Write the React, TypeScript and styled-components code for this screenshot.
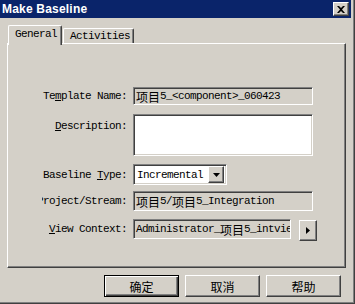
import React from "react";
import styled, { createGlobalStyle, css } from "styled-components";

const GlobalStyle = createGlobalStyle`
  html, body { margin: 0; padding: 0; background: #d4d0c8; }
  * { box-sizing: border-box; }
`;

const MONO = `"Liberation Mono", monospace`;
const CJK = `"Noto Sans CJK SC", "Liberation Sans", sans-serif`;

const raised = css`
  border: 1px solid;
  border-color: #ffffff #404040 #404040 #ffffff;
  box-shadow: inset -1px -1px #808080, inset 1px 1px #d4d0c8;
`;

const sunken = css`
  border: 1px solid;
  border-color: #808080 #ffffff #ffffff #808080;
  box-shadow: inset 1px 1px #404040, inset -1px -1px #d4d0c8;
`;

const monoText = css`
  font-family: ${MONO};
  font-size: 11px;
  letter-spacing: -0.6px;
  color: #000;
`;

const Window = styled.div`
  width: 355px;
  height: 304px;
  background: #d4d0c8;
  display: flex;
  flex-direction: column;
  padding: 0 4px 2px 0;
  box-shadow: inset -1px -1px #404040, inset -2px -2px #808080;
  overflow: hidden;
`;

const TitleBar = styled.div`
  height: 18px;
  background: #0a246a;
  display: flex;
  align-items: center;
  justify-content: space-between;
  padding: 0 2px 0 2px;
`;

const Title = styled.span`
  color: #ffffff;
  font-family: "Liberation Sans", Arial, sans-serif;
  font-weight: bold;
  font-size: 12px;
  letter-spacing: 0.2px;
`;

const CloseButton = styled.div`
  width: 16px;
  height: 14px;
  background: #d4d0c8;
  ${raised};
  display: flex;
  align-items: center;
  justify-content: center;
`;

const Body = styled.div`
  display: flex;
  flex-direction: column;
  padding: 7px 0 0 7px;
`;

const TabStrip = styled.div`
  display: flex;
  align-items: flex-end;
  height: 18px;
  padding-left: 1px;
  position: relative;
  z-index: 1;
`;

const Tab = styled.div<{ $active?: boolean }>`
  ${monoText};
  background: #d4d0c8;
  border-top: 1px solid #ffffff;
  border-left: 1px solid #ffffff;
  border-right: 1px solid #404040;
  border-radius: 2px 2px 0 0;
  box-shadow: inset -1px 0 #808080;
  display: flex;
  align-items: center;
  ${(p) =>
    p.$active
      ? css`
          height: 20px;
          margin-bottom: -2px;
          padding: 0 6px 3px 6px;
          width: 54px;
        `
      : css`
          height: 15px;
          padding: 0 5px 0 6px;
          width: 71px;
          margin-left: 1px;
        `}
`;

const Panel = styled.div`
  width: 339px;
  height: 225px;
  border: 1px solid;
  border-color: #ffffff #404040 #404040 #ffffff;
  box-shadow: inset -1px -1px #808080;
  padding: 43px 0 0 34px;
  display: flex;
  flex-direction: column;
`;

const Row = styled.div<{ $gap: number; $height: number; $top?: boolean }>`
  display: flex;
  align-items: ${(p) => (p.$top ? "flex-start" : "center")};
  margin-top: ${(p) => p.$gap}px;
  height: ${(p) => p.$height}px;
  gap: 6px;
`;

const Label = styled.div<{ $pad?: number }>`
  width: 85px;
  flex: none;
  display: flex;
  justify-content: flex-end;
  overflow: hidden;
  white-space: nowrap;
  ${monoText};
  padding-top: ${(p) => p.$pad ?? 0}px;
`;

const U = styled.span`
  text-decoration: underline;
`;

const Han = styled.span`
  font-family: ${CJK};
  font-size: 12px;
  letter-spacing: 0;
`;

const Latin = styled.span`
  ${monoText};
`;

const Field = styled.div<{ $width: number; $white?: boolean }>`
  width: ${(p) => p.$width}px;
  height: 100%;
  background: ${(p) => (p.$white ? "#ffffff" : "#d4d0c8")};
  ${sunken};
  ${monoText};
  display: flex;
  align-items: center;
  padding: 0 2px;
  white-space: nowrap;
  overflow: hidden;
`;

const Select = styled.div`
  width: 94px;
  height: 21px;
  background: #ffffff;
  ${sunken};
  display: flex;
  align-items: center;
  justify-content: space-between;
  padding: 2px 2px 2px 3px;
  ${monoText};
`;

const DropButton = styled.div`
  width: 16px;
  height: 17px;
  background: #d4d0c8;
  ${raised};
  display: flex;
  align-items: center;
  justify-content: center;
`;

const ArrowButton = styled.div`
  width: 18px;
  height: 21px;
  margin-left: 2px;
  margin-top: 2px;
  background: #d4d0c8;
  ${raised};
  display: flex;
  align-items: center;
  justify-content: center;
`;

const ButtonRow = styled.div`
  display: flex;
  justify-content: flex-end;
  gap: 6px;
  padding-right: 10px;
  margin-top: 7px;
`;

const Button = styled.div<{ $default?: boolean }>`
  width: 75px;
  height: 22px;
  background: #d4d0c8;
  font-family: ${CJK};
  font-size: 12px;
  color: #000;
  display: flex;
  align-items: center;
  justify-content: center;
  ${(p) =>
    p.$default
      ? css`
          border: 1px solid #000;
          box-shadow: inset 1px 1px #ffffff, inset -1px -1px #404040,
            inset -2px -2px #808080;
        `
      : raised}
`;

export default function App() {
  return (
    <>
      <GlobalStyle />
      <Window>
        <TitleBar>
          <Title>Make Baseline</Title>
          <CloseButton>
            <svg width="8" height="7" viewBox="0 0 8 7">
              <path d="M0 0 L2 0 L4 2 L6 0 L8 0 L5 3.5 L8 7 L6 7 L4 5 L2 7 L0 7 L3 3.5 Z" fill="#000" />
            </svg>
          </CloseButton>
        </TitleBar>
        <Body>
          <TabStrip>
            <Tab $active>General</Tab>
            <Tab>Activities</Tab>
          </TabStrip>
          <Panel>
            <Row $gap={0} $height={18}>
              <Label>
                <span>
                  Te<U>m</U>plate Name:
                </span>
              </Label>
              <Field $width={180}>
                <Han>项目</Han>
                <Latin>5_&lt;component&gt;_060423</Latin>
              </Field>
            </Row>
            <Row $gap={9} $height={42} $top>
              <Label $pad={6}>
                <span>
                  <U>D</U>escription:
                </span>
              </Label>
              <Field $width={180} $white />
            </Row>
            <Row $gap={8} $height={21}>
              <Label>
                <span>
                  Baseline <U>T</U>ype:
                </span>
              </Label>
              <Select>
                <span>Incremental</span>
                <DropButton>
                  <svg width="7" height="4" viewBox="0 0 7 4">
                    <path d="M0 0 H7 L3.5 4 Z" fill="#000" />
                  </svg>
                </DropButton>
              </Select>
            </Row>
            <Row $gap={6} $height={20}>
              <Label>
                <span>Project/Stream:</span>
              </Label>
              <Field $width={180}>
                <Han>项目</Han>
                <Latin>5/</Latin>
                <Han>项目</Han>
                <Latin>5_Integration</Latin>
              </Field>
            </Row>
            <Row $gap={8} $height={20}>
              <Label>
                <span>
                  <U>V</U>iew Context:
                </span>
              </Label>
              <Field $width={158}>
                <Latin>Administrator_</Latin>
                <Han>项目</Han>
                <Latin>5_intview</Latin>
              </Field>
              <ArrowButton>
                <svg width="4" height="7" viewBox="0 0 4 7">
                  <path d="M0 0 L4 3.5 L0 7 Z" fill="#000" />
                </svg>
              </ArrowButton>
            </Row>
          </Panel>
          <ButtonRow>
            <Button $default>确定</Button>
            <Button>取消</Button>
            <Button>帮助</Button>
          </ButtonRow>
        </Body>
      </Window>
    </>
  );
}
